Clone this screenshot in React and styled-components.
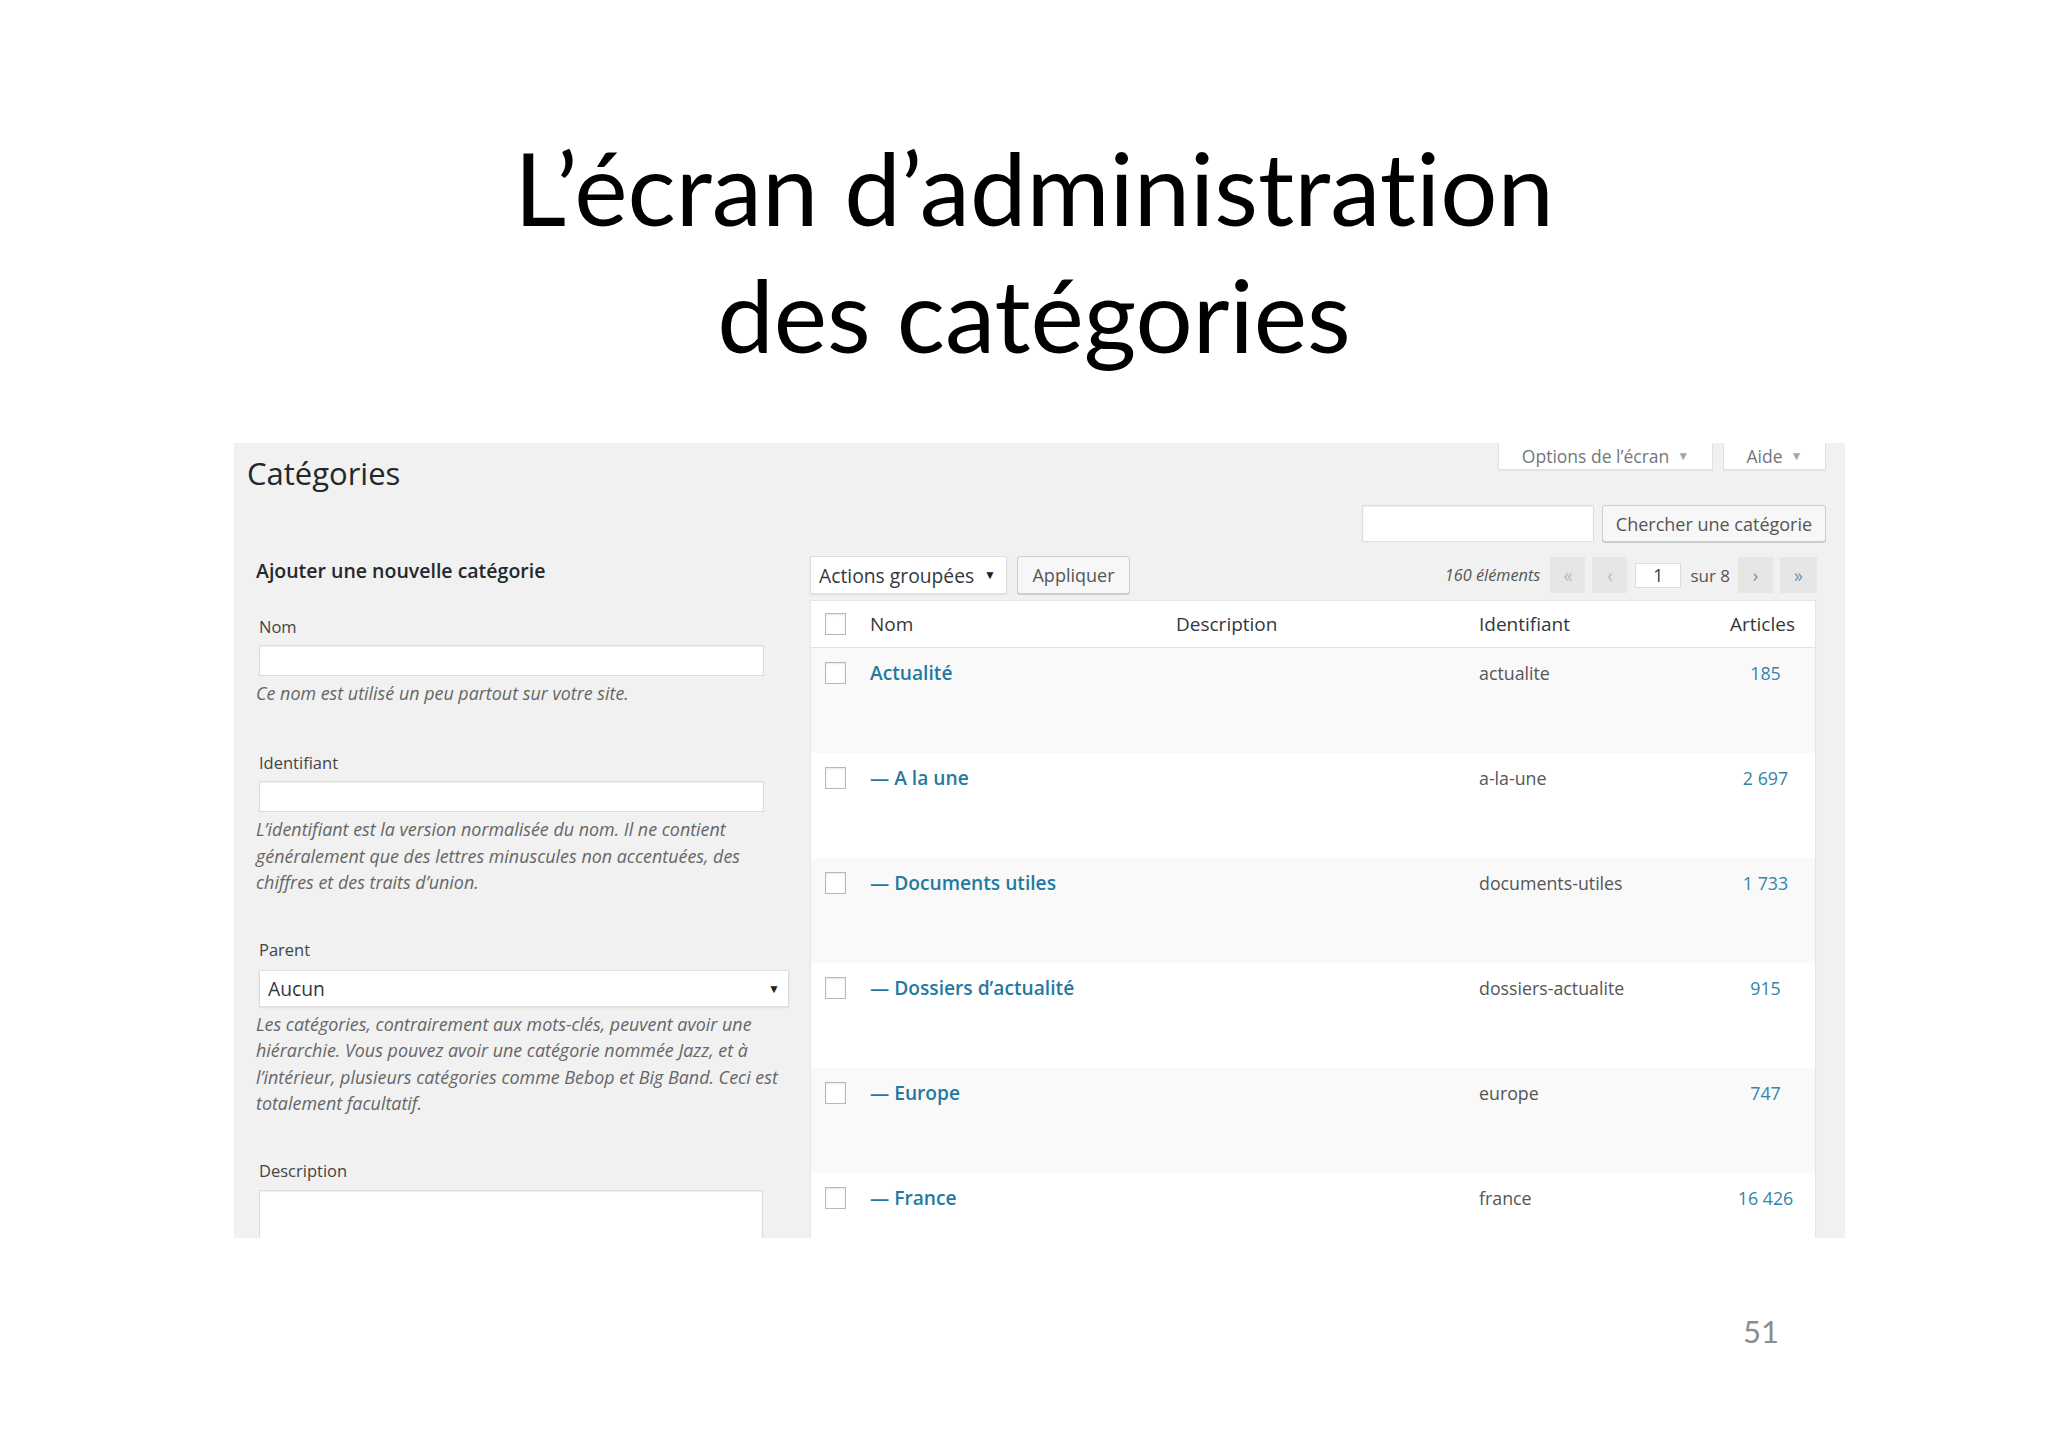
import React from "react";
import styled, { createGlobalStyle } from "styled-components";

const GlobalStyle = createGlobalStyle`
  html, body {
    margin: 0;
    padding: 0;
    background: #fff;
  }
  body {
    font-family: "Open Sans", "Liberation Sans", sans-serif;
    font-variant-ligatures: none;
  }
  * {
    box-sizing: border-box;
  }
`;

const link = "#237a9e";

const rows = [
  { name: "Actualité", slug: "actualite", count: "185" },
  { name: "— A la une", slug: "a-la-une", count: "2 697" },
  { name: "— Documents utiles", slug: "documents-utiles", count: "1 733" },
  { name: "— Dossiers d’actualité", slug: "dossiers-actualite", count: "915" },
  { name: "— Europe", slug: "europe", count: "747" },
  { name: "— France", slug: "france", count: "16 426" },
];

const Slide = styled.div`
  width: 2048px;
  height: 1448px;
  background: #fff;
  display: flex;
  flex-direction: column;
  overflow: hidden;
`;

const Title = styled.h1`
  margin: 124px 0 0;
  padding-left: 20px;
  text-align: center;
  font-family: Lato, "Liberation Sans", sans-serif;
  font-variant-ligatures: none;
  font-weight: 400;
  font-size: 101px;
  line-height: 127px;
  color: #000;
`;

const Panel = styled.div`
  margin: 65px 0 0 234px;
  width: 1611px;
  height: 795px;
  flex-shrink: 0;
  background: #f1f1f1;
  overflow: hidden;
  padding: 0 19px 0 13px;
  color: #444;
`;

const HeaderRow = styled.div`
  display: flex;
  justify-content: space-between;
  align-items: flex-start;
  height: 50px;
`;

const PageHeading = styled.h2`
  margin: 10px 0 0;
  font-size: 31px;
  line-height: 40px;
  font-weight: 400;
  color: #23282d;
`;

const Tabs = styled.div`
  display: flex;
  gap: 10px;
`;

const Tab = styled.div`
  width: ${(p) => p.$w}px;
  height: 27px;
  display: flex;
  align-items: center;
  justify-content: center;
  gap: 8px;
  background: #fff;
  border: 1px solid #e1e1e1;
  border-top: none;
  box-shadow: 0 1px 1px rgba(0, 0, 0, 0.04);
  font-size: 17.5px;
  color: #72777c;
`;

const SmallArrow = styled.span`
  font-size: ${(p) => p.$size || 12}px;
  color: ${(p) => p.$color || "#a0a5aa"};
  line-height: 1;
`;

const SearchRow = styled.div`
  margin-top: 12px;
  display: flex;
  justify-content: flex-end;
  gap: 8px;
`;

const TextBox = styled.div`
  width: ${(p) => p.$w}px;
  height: ${(p) => p.$h || 31}px;
  background: #fff;
  border: 1px solid #ddd;
  box-shadow: inset 0 1px 2px rgba(0, 0, 0, 0.07);
`;

const Button = styled.div`
  width: ${(p) => p.$w}px;
  height: ${(p) => p.$h}px;
  display: flex;
  align-items: center;
  justify-content: center;
  background: #f7f7f7;
  border: 1px solid #ccc;
  border-radius: 3px;
  box-shadow: 0 1px 0 #ccc;
  font-size: 18px;
  color: #555;
`;

const Columns = styled.div`
  margin-top: 14px;
  display: flex;
  align-items: flex-start;
`;

const LeftCol = styled.div`
  margin-left: 9px;
  width: 534px;
  flex-shrink: 0;
`;

const FormTitle = styled.h3`
  margin: 2px 0 0;
  font-size: 19.5px;
  line-height: 26px;
  font-weight: 600;
  color: #23282d;
`;

const Field = styled.div`
  margin-top: ${(p) => p.$top || 46}px;
`;

const Label = styled.div`
  padding-left: 3px;
  font-size: 16.5px;
  line-height: 22px;
  color: #444;
`;

const FieldBox = styled(TextBox)`
  margin: ${(p) => p.$gap || 7}px 0 0 3px;
`;

const Select = styled.div`
  margin: 9px 0 0 3px;
  width: ${(p) => p.$w}px;
  height: ${(p) => p.$h}px;
  display: flex;
  align-items: center;
  justify-content: space-between;
  padding: 0 8px 0 8px;
  background: #fff;
  border: 1px solid #ddd;
  box-shadow: 0 1px 2px rgba(0, 0, 0, 0.07);
  font-size: 19.3px;
  color: #32373c;
`;

const Help = styled.p`
  margin: 4px 0 0;
  font-size: 17.9px;
  line-height: 26.3px;
  font-style: italic;
  color: #666;
  white-space: nowrap;
`;

const RightCol = styled.div`
  margin-left: 20px;
  width: 1006px;
  flex-shrink: 0;
`;

const Toolbar = styled.div`
  height: 38px;
  display: flex;
  align-items: center;
  justify-content: space-between;
`;

const BulkGroup = styled.div`
  display: flex;
  gap: 10px;
`;

const BulkSelect = styled(Select)`
  margin: 0;
  padding: 0 10px 0 8px;
`;

const Pagination = styled.div`
  display: flex;
  align-items: center;
  gap: 7px;
  margin-right: -1px;
`;

const Count = styled.span`
  margin-right: 3px;
  font-size: 16.3px;
  font-style: italic;
  color: #555;
`;

const PageBtn = styled.div`
  width: ${(p) => p.$w || 35}px;
  height: 36px;
  display: flex;
  align-items: center;
  justify-content: center;
  background: #e6e6e6;
  font-size: 18px;
  color: ${(p) => (p.$off ? "#b4b9be" : "#6c93ad")};
`;

const PageInput = styled.div`
  width: 46px;
  height: 25px;
  margin: 0 2px 0 1px;
  display: flex;
  align-items: center;
  justify-content: center;
  background: #fff;
  border: 1px solid #ddd;
  font-size: 17.5px;
  color: #32373c;
`;

const PageOf = styled.span`
  font-size: 17px;
  color: #555;
  margin-right: 1px;
`;

const Table = styled.div`
  margin-top: 6px;
  background: #fff;
  border: 1px solid #e5e5e5;
  box-shadow: 0 1px 1px rgba(0, 0, 0, 0.04);
`;

const grid = `
  display: grid;
  grid-template-columns: 59px 306px 303px 227px 109px;
`;

const HeadRow = styled.div`
  ${grid}
  height: 47px;
  align-items: center;
  border-bottom: 1px solid #e1e1e1;
  font-size: 19px;
  color: #32373c;
`;

const Row = styled.div`
  ${grid}
  height: 105px;
  align-items: start;
  padding-top: 12px;
  background: ${(p) => (p.$odd ? "#f9f9f9" : "#fff")};
`;

const CheckCell = styled.div`
  padding-left: 14px;
  padding-top: ${(p) => (p.$head ? 0 : 2)}px;
`;

const Check = styled.div`
  width: 21px;
  height: 22px;
  background: #fff;
  border: 1px solid #b4b9be;
  box-shadow: inset 0 1px 2px rgba(0, 0, 0, 0.1);
`;

const Cell = styled.div`
  line-height: 26px;
  white-space: nowrap;
  text-align: ${(p) => p.$align || "left"};
  padding-right: ${(p) => p.$pr || 0}px;
  padding-left: ${(p) => p.$pl || 0}px;
`;

const Name = styled(Cell)`
  font-size: 19.2px;
  font-weight: 600;
  color: ${link};
`;

const Slug = styled(Cell)`
  font-size: 17.8px;
  color: #555;
`;

const Num = styled(Cell)`
  font-size: 17.8px;
  color: #3584ab;
`;

const Footer = styled.div`
  margin-top: 73px;
  padding-right: 269px;
  text-align: right;
  font-family: Lato, "Liberation Sans", sans-serif;
  font-size: 31px;
  line-height: 40px;
  color: #8c8c8c;
`;

export default function App() {
  return (
    <>
      <GlobalStyle />
      <Slide>
        <Title>
          L’écran d’administration
          <br />
          des catégories
        </Title>

        <Panel>
          <HeaderRow>
            <PageHeading>Catégories</PageHeading>
            <Tabs>
              <Tab $w={215}>
                Options de l’écran <SmallArrow>▼</SmallArrow>
              </Tab>
              <Tab $w={103}>
                Aide <SmallArrow>▼</SmallArrow>
              </Tab>
            </Tabs>
          </HeaderRow>

          <SearchRow>
            <TextBox $w={232} $h={37} />
            <Button $w={224} $h={37}>
              Chercher une catégorie
            </Button>
          </SearchRow>

          <Columns>
            <LeftCol>
              <FormTitle>Ajouter une nouvelle catégorie</FormTitle>

              <Field $top={32}>
                <Label>Nom</Label>
                <FieldBox $w={505} $h={31} />
                <Help>Ce nom est utilisé un peu partout sur votre site.</Help>
              </Field>

              <Field>
                <Label>Identifiant</Label>
                <FieldBox $w={505} $h={31} />
                <Help>
                  L’identifiant est la version normalisée du nom. Il ne contient
                  <br />
                  généralement que des lettres minuscules non accentuées, des
                  <br />
                  chiffres et des traits d’union.
                </Help>
              </Field>

              <Field $top={44}>
                <Label>Parent</Label>
                <Select $w={530} $h={37}>
                  Aucun
                  <SmallArrow $size={12} $color="#222">
                    ▼
                  </SmallArrow>
                </Select>
                <Help>
                  Les catégories, contrairement aux mots-clés, peuvent avoir une
                  <br />
                  hiérarchie. Vous pouvez avoir une catégorie nommée Jazz, et à
                  <br />
                  l’intérieur, plusieurs catégories comme Bebop et Big Band. Ceci est
                  <br />
                  totalement facultatif.
                </Help>
              </Field>

              <Field $top={44}>
                <Label>Description</Label>
                <FieldBox $w={504} $h={120} $gap={8} />
              </Field>
            </LeftCol>

            <RightCol>
              <Toolbar>
                <BulkGroup>
                  <BulkSelect $w={197} $h={38}>
                    Actions groupées
                    <SmallArrow $size={12} $color="#222">
                      ▼
                    </SmallArrow>
                  </BulkSelect>
                  <Button $w={113} $h={38}>
                    Appliquer
                  </Button>
                </BulkGroup>
                <Pagination>
                  <Count>160 éléments</Count>
                  <PageBtn $off>«</PageBtn>
                  <PageBtn $off>‹</PageBtn>
                  <PageInput>1</PageInput>
                  <PageOf>sur 8</PageOf>
                  <PageBtn>›</PageBtn>
                  <PageBtn $w={37}>»</PageBtn>
                </Pagination>
              </Toolbar>

              <Table>
                <HeadRow>
                  <CheckCell $head>
                    <Check />
                  </CheckCell>
                  <Cell>Nom</Cell>
                  <Cell>Description</Cell>
                  <Cell>Identifiant</Cell>
                  <Cell $align="right" $pr={20}>
                    Articles
                  </Cell>
                </HeadRow>
                {rows.map((r, i) => (
                  <Row key={r.slug} $odd={i % 2 === 0}>
                    <CheckCell>
                      <Check />
                    </CheckCell>
                    <Name>{r.name}</Name>
                    <Cell />
                    <Slug>{r.slug}</Slug>
                    <Num $align="center" $pl={10}>
                      {r.count}
                    </Num>
                  </Row>
                ))}
              </Table>
            </RightCol>
          </Columns>
        </Panel>

        <Footer>51</Footer>
      </Slide>
    </>
  );
}
